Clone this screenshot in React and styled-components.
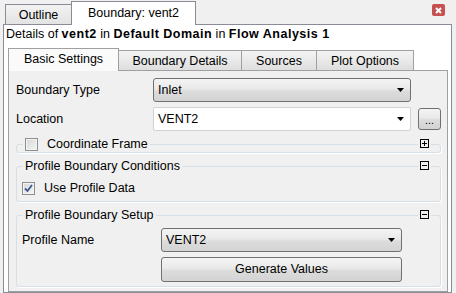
import React from 'react';
import styled, { createGlobalStyle } from 'styled-components';

const GlobalStyle = createGlobalStyle`
  html, body { margin: 0; padding: 0; background: #f0f0f0; overflow: hidden; }
  body { font-family: "Liberation Sans", Arial, sans-serif; font-size: 12.5px; color: #000; }
  * { box-sizing: border-box; }
`;

const Window = styled.div`
  width: 456px;
  height: 293px;
  display: flex;
  flex-direction: column;
  overflow: hidden;
`;

const TopBar = styled.div`
  height: 24px;
  display: flex;
  align-items: flex-end;
  padding: 0 11px 0 5px;
  position: relative;
  z-index: 1;
`;

const TopTab = styled.div`
  width: ${(p) => p.$w}px;
  height: ${(p) => (p.$active ? 24 : 20)}px;
  margin-bottom: ${(p) => (p.$active ? -1 : 0)}px;
  padding-bottom: ${(p) => (p.$active ? 2 : 0)}px;
  display: flex;
  align-items: center;
  justify-content: center;
  border: 1px solid #898c95;
  border-bottom: none;
  background: ${(p) => (p.$active ? '#ffffff' : 'linear-gradient(#f2f2f2, #e3e3e3)')};
  margin-right: -1px;
  white-space: nowrap;
`;

const CloseButton = styled.div`
  margin-left: auto;
  align-self: flex-start;
  margin-top: 4px;
  width: 13px;
  height: 12px;
  border-radius: 2px;
  background: #c75050;
  display: flex;
  align-items: center;
  justify-content: center;
`;

const OuterPanel = styled.div`
  flex: 1;
  margin-left: 3px;
  width: 449px;
  border: 1px solid #898c95;
  background: #ffffff;
  display: flex;
  flex-direction: column;
`;

const Details = styled.div`
  height: 23px;
  padding: 1px 0 0 2px;
  line-height: 16px;
  white-space: nowrap;
`;

const Strong = styled.b`
  letter-spacing: 0.5px;
`;

const InnerTabs = styled.div`
  flex: 1;
  margin: 0 3px 0 4px;
  display: flex;
  flex-direction: column;
`;

const InnerTabBar = styled.div`
  height: 22px;
  display: flex;
  align-items: flex-end;
  position: relative;
  z-index: 1;
`;

const InnerTab = styled.div`
  width: ${(p) => p.$w}px;
  height: ${(p) => (p.$active ? 23 : 20)}px;
  margin-bottom: ${(p) => (p.$active ? -1 : 0)}px;
  padding-bottom: ${(p) => (p.$active ? 2 : 0)}px;
  display: flex;
  align-items: center;
  justify-content: center;
  border: 1px solid #a0a0a0;
  border-bottom: none;
  margin-right: -1px;
  background: ${(p) => (p.$active ? '#fafafa' : 'linear-gradient(#f4f4f4, #dedede)')};
  white-space: nowrap;
`;

const Pane = styled.div`
  flex: 1;
  border: 1px solid #a0a0a0;
  background: #f0f0f0;
  padding: 7px 6px 0 7px;
  display: flex;
  flex-direction: column;
`;

const FormGrid = styled.div`
  display: grid;
  grid-template-columns: ${(p) => p.$cols};
  column-gap: 7px;
  row-gap: 5px;
  align-items: center;
  padding: ${(p) => p.$pad || '0'};
`;

const Label = styled.span`
  white-space: nowrap;
`;

const Select = styled.div`
  height: 24px;
  border: 1px solid #707070;
  border-radius: 3px;
  background: linear-gradient(#f4f4f4, #e9e9e9 45%, #dcdcdc 55%, #d3d3d3);
  display: flex;
  align-items: center;
  justify-content: space-between;
  padding: 0 6px 0 4px;
`;

const TextCombo = styled(Select)`
  border: 1px solid #d2d2d2;
  border-radius: 2px;
  background: #ffffff;
`;

const Button = styled.div`
  height: ${(p) => p.$h || 25}px;
  border: 1px solid #707070;
  border-radius: 3px;
  background: linear-gradient(#f4f4f4, #e9e9e9 45%, #dcdcdc 55%, #d3d3d3);
  display: flex;
  align-items: ${(p) => (p.$bottom ? 'flex-end' : 'center')};
  justify-content: center;
  padding-bottom: ${(p) => (p.$bottom ? 3 : 0)}px;
  font-size: ${(p) => (p.$bottom ? 11 : 12.5)}px;
  line-height: 1;
`;

const Arrow = () => (
  <svg width="7" height="4" viewBox="0 0 7 4">
    <path d="M0 0H7L3.5 4Z" fill="#000" />
  </svg>
);

const GroupWrap = styled.div`
  position: relative;
  margin-top: 5px;
`;

const Fieldset = styled.fieldset`
  margin: 0;
  padding: 0;
  min-width: 0;
  border: 1px solid #d5dfe5;
  border-radius: 3px;
  box-shadow: 1px 1px 0 #ffffff;
`;

const Legend = styled.legend`
  margin-left: 6px;
  padding: 0 2px;
  height: 16px;
  line-height: 16px;
  display: flex;
  align-items: center;
  gap: 9px;
  white-space: nowrap;
`;

const Toggle = styled.div`
  position: absolute;
  top: 3px;
  right: 10px;
  padding: 0 2px;
  background: #f0f0f0;
  display: flex;
`;

const CheckRow = styled.div`
  display: flex;
  align-items: center;
  gap: 9px;
  height: 14px;
  padding: ${(p) => p.$pad || '0'};
  box-sizing: content-box;
`;

const CheckBox = styled.span`
  width: 13px;
  height: 13px;
  border: 1px solid #8e8f8f;
  background: linear-gradient(135deg, #d6d6d6, #f6f6f6);
  box-shadow: inset 0 0 0 1px #f4f4f4;
  display: inline-flex;
  align-items: center;
  justify-content: center;
  flex: none;
`;

const Check = ({ checked }) => (
  <CheckBox>
    {checked && (
      <svg width="9" height="9" viewBox="0 0 9 9">
        <path d="M1 4.5L3.5 7L8 1" fill="none" stroke="#3d5694" strokeWidth="1.8" />
      </svg>
    )}
  </CheckBox>
);

const ToggleIcon = ({ plus }) => (
  <svg width="9" height="9" viewBox="0 0 9 9">
    <rect x="0.5" y="0.5" width="8" height="8" fill="#f0f0f0" stroke="#000" />
    <path d="M2 4.5H7" stroke="#000" />
    {plus && <path d="M4.5 2V7" stroke="#000" />}
  </svg>
);

const Group = ({ legend, open, children }) => (
  <GroupWrap>
    <Fieldset>
      <Legend>{legend}</Legend>
      {children}
    </Fieldset>
    <Toggle>
      <ToggleIcon plus={!open} />
    </Toggle>
  </GroupWrap>
);

export default function App() {
  return (
    <Window>
      <GlobalStyle />
      <TopBar>
        <TopTab $w={67}>Outline</TopTab>
        <TopTab $active $w={125}>Boundary: vent2</TopTab>
        <CloseButton>
          <svg width="7" height="7" viewBox="0 0 7 7">
            <path d="M1 1L6 6M6 1L1 6" stroke="#fff" strokeWidth="2" />
          </svg>
        </CloseButton>
      </TopBar>
      <OuterPanel>
        <Details>
          Details of <Strong>vent2</Strong> in <Strong>Default Domain</Strong> in{' '}
          <Strong>Flow Analysis 1</Strong>
        </Details>
        <InnerTabs>
          <InnerTabBar>
            <InnerTab $active $w={111}>Basic Settings</InnerTab>
            <InnerTab $w={124}>Boundary Details</InnerTab>
            <InnerTab $w={76}>Sources</InnerTab>
            <InnerTab $w={98}>Plot Options</InnerTab>
          </InnerTabBar>
          <Pane>
            <FormGrid $cols="130px 1fr 23px">
              <Label>Boundary Type</Label>
              <Select>
                <span>Inlet</span>
                <Arrow />
              </Select>
              <span />
              <Label>Location</Label>
              <TextCombo>
                <span>VENT2</span>
                <Arrow />
              </TextCombo>
              <Button $h={22} $bottom>...</Button>
            </FormGrid>
            <Group
              legend={
                <>
                  <Check />
                  <span>Coordinate Frame</span>
                </>
              }
            />
            <Group legend="Profile Boundary Conditions" open>
              <CheckRow $pad="7px 5px 6px">
                <Check checked />
                <span>Use Profile Data</span>
              </CheckRow>
            </Group>
            <Group legend="Profile Boundary Setup" open>
              <FormGrid $cols="132px 241px" $pad="5px 5px 4px">
                <Label>Profile Name</Label>
                <Select>
                  <span>VENT2</span>
                  <Arrow />
                </Select>
                <span />
                <Button>Generate Values</Button>
              </FormGrid>
            </Group>
          </Pane>
        </InnerTabs>
      </OuterPanel>
    </Window>
  );
}
